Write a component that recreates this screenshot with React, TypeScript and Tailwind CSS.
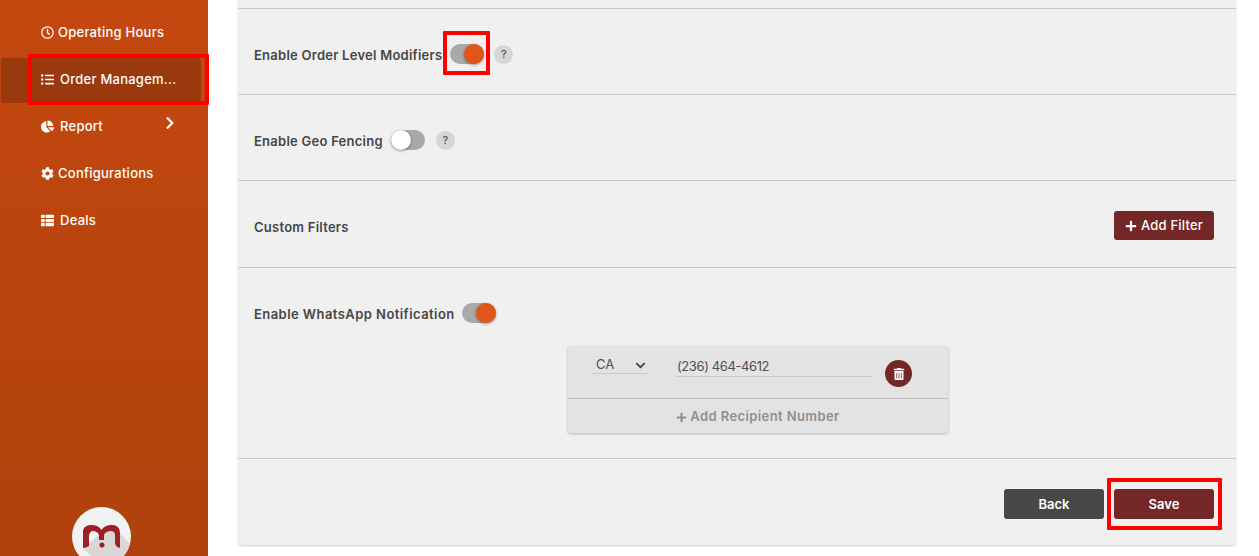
import { FaChartPie, FaChevronDown, FaChevronRight, FaCog, FaListUl, FaPlus, FaRegClock, FaThList, FaTrashAlt } from "react-icons/fa";
import type { ReactNode } from "react";

function NavItem({ icon, label, active, arrow, narrow }: { icon: ReactNode; label: string; active?: boolean; arrow?: boolean; narrow?: boolean }) {
  return (
    <div className={`relative flex h-[45px] mb-[2px] ml-px w-[200px] items-center pl-[40px] pb-[2px] rounded-[4px] ${active ? "bg-[#9a390e]" : ""}`}>
      <span className={`shrink-0 text-[13px] text-white ${narrow ? "w-[17px]" : "w-[19px]"}`}>{icon}</span>
      <span className="text-[13px] font-medium text-white tracking-[0.25px]">{label}</span>
      {arrow && (
        <FaChevronRight className="absolute right-[24px] top-[11px] text-[14px] text-white" />
      )}
    </div>
  );
}

function Toggle({ on }: { on?: boolean }) {
  return (
    <div className={`flex h-[20px] w-[34px] items-center rounded-full bg-[#a9a9a9] ${on ? "justify-end" : "justify-start"}`}>
      <div className={`h-[20px] w-[20px] rounded-full shadow-[0_1px_3px_rgba(0,0,0,0.4)] ${on ? "bg-[#e2551a]" : "bg-white"}`} />
    </div>
  );
}

function Help() {
  return (
    <div className="flex h-[19px] w-[19px] items-center justify-center rounded-full bg-[#d6d6d6] text-[11px] font-medium text-[#555]">
      ?
    </div>
  );
}

function Label({ children }: { children: ReactNode }) {
  return <span className="pt-[4px] text-[13px] font-semibold text-[#464646] tracking-[0.25px]">{children}</span>;
}

export default function App() {
  return (
    <div className="relative flex h-[556px] w-[1259px] overflow-hidden bg-white font-['Inter',sans-serif]">
      {/* sidebar */}
      <aside className="flex h-full w-[208px] shrink-0 flex-col bg-gradient-to-b from-[#c4480f] to-[#b0410d] pt-[11px]">
        <NavItem icon={<FaRegClock />} label="Operating Hours" narrow />
        <NavItem icon={<FaListUl />} label="Order Managem..." active />
        <NavItem icon={<FaChartPie />} label="Report" arrow />
        <NavItem icon={<FaCog />} label="Configurations" narrow />
        <NavItem icon={<FaThList />} label="Deals" />
        <div className="mt-auto mb-[-10px] ml-[72px] flex h-[59px] w-[59px] shrink-0 items-center justify-center overflow-hidden rounded-full bg-[#f1f2f2]">
          <svg viewBox="0 0 59 59" className="h-[59px] w-[59px]">
            <path d="M11 41 L40 18 L59 38 L59 59 L29 59 Z" fill="#d9d6d6" />
            <path d="M11 41 V25 C11 20 15 18 19 18 C23 18 27 19 29.5 23 C32 19 36 18 40 18 C45 18 48 21 48 26 V41 C44 40 43 38 43 34 V28 C43 25 41 24 39 24 C36 24 33 25 32 28 V33 H27 V28 C26 25 23 24 21 24 C19 24 17 26 17 29 V39 C15 40 13 41 11 41 Z" fill="#a01f26" />
            <circle cx="30" cy="38" r="2.5" fill="#a01f26" />
          </svg>
        </div>
      </aside>

      {/* content */}
      <main className="h-full flex-1 pl-[30px] pr-[23px]">
        <div className="h-[545px] rounded-b-[4px] bg-[#f0f0f0] shadow-[0_1px_2px_rgba(0,0,0,0.2)]">
          <div className="h-[9px] border-b border-[#c9c9c9]" />

          <div className="flex h-[86px] items-center border-b border-[#c9c9c9] pl-[16px] pt-[5px]">
            <Label>Enable Order Level Modifiers</Label>
            <div className="ml-[8px]"><Toggle on /></div>
            <div className="ml-[10px]"><Help /></div>
          </div>

          <div className="flex h-[86px] items-center border-b border-[#c9c9c9] pl-[16px] pt-[5px]">
            <Label>Enable Geo Fencing</Label>
            <div className="ml-[8px]"><Toggle /></div>
            <div className="ml-[11px]"><Help /></div>
          </div>

          <div className="flex h-[87px] items-center justify-between border-b border-[#c9c9c9] pl-[16px] pr-[22px] pt-[3px]">
            <Label>Custom Filters</Label>
            <button className="flex h-[29px] w-[100px] items-center justify-center gap-[4px] rounded-[3px] bg-[#732727] text-[13px] font-medium tracking-[0.2px] text-white">
              <FaPlus className="text-[12px]" />
              Add Filter
            </button>
          </div>

          <div className="h-[191px] border-b border-[#c9c9c9] pl-[16px]">
            <div className="flex h-[55px] items-center pt-[35px]">
              <span className="pt-[4px] text-[13px] font-semibold text-[#464646] tracking-[0.44px]">Enable WhatsApp Notification</span>
              <div className="ml-[7px]"><Toggle on /></div>
            </div>
            <div className="ml-[314px] mt-[23px] h-[87px] w-[380px] rounded-[3px] bg-[#e3e3e3] shadow-[0_1px_3px_rgba(0,0,0,0.25)]">
              <div className="flex h-[53px] border-b border-[#c2c2c2] pl-[24px]">
                <div className="mt-[9px] flex h-[19px] w-[56px] items-center justify-between border-b border-[#cacaca] pl-[4px] pr-[2px] pt-[2px] text-[13px] text-[#505050]">
                  CA
                  <FaChevronDown className="text-[11px] text-[#444]" />
                </div>
                <div className="ml-[28px] mt-[9px] h-[22px] w-[196px] border-b border-[#cacaca] pl-[1px] pt-[2px] text-[13px] tracking-[-0.4px] text-[#505050]">
                  (236) 464-4612
                </div>
                <div className="ml-[13px] mt-[14px] flex h-[27px] w-[27px] items-center justify-center rounded-full bg-[#732727] text-[12px] text-white">
                  <FaTrashAlt />
                </div>
              </div>
              <div className="flex h-[34px] items-center justify-center gap-[3px] pt-[2px] text-[13px] font-semibold tracking-[0.4px] text-[#8f8f8f]">
                <FaPlus className="text-[11px]" />
                Add Recipient Number
              </div>
            </div>
          </div>

          <div className="flex justify-end gap-[10px] pr-[22px] pt-[30px]">
            <button className="h-[30px] w-[100px] rounded-[3px] bg-[#484848] pt-[2px] text-[13px] font-semibold text-white">Back</button>
            <button className="h-[30px] w-[100px] rounded-[3px] bg-[#732727] pt-[2px] text-[13px] font-semibold text-white">Save</button>
          </div>
        </div>
      </main>

      {/* red annotation boxes over the screenshot */}
      <div className="absolute left-[28px] top-[54px] h-[51px] w-[181px] rounded-[1px] border-[4px] border-[#ff0000]" />
      <div className="absolute left-[443px] top-[31px] h-[44px] w-[47px] rounded-[1px] border-[4px] border-[#ff0000]" />
      <div className="absolute left-[1107px] top-[478px] h-[52px] w-[115px] rounded-[1px] border-[4px] border-[#ff0000]" />
    </div>
  );
}
